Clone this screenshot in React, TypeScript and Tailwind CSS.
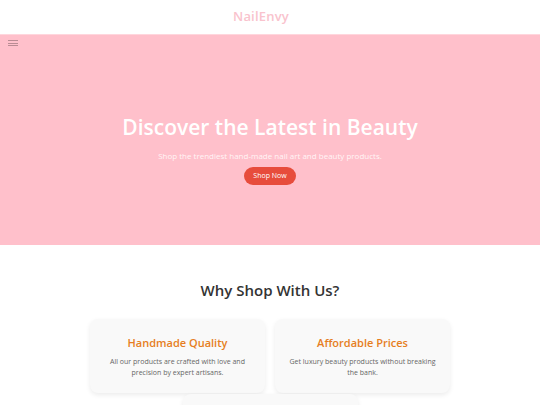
const FEATURES = [
  {
    title: 'Handmade Quality',
    text: 'All our products are crafted with love and precision by expert artisans.',
  },
  {
    title: 'Affordable Prices',
    text: 'Get luxury beauty products without breaking the bank.',
  },
  {
    title: 'Fast Shipping',
    text: 'Your order ships within 24 hours, right to your door.',
  },
];

export default function App() {
  return (
    <div className="min-h-screen bg-white font-['Open_Sans',sans-serif]">
      {/* Header */}
      <header className="h-[35px] flex items-center justify-center pr-[18px] border-b border-[#ffd6dd] bg-white">
        <h1 className="text-[13px] font-semibold text-[#f9c3cd] tracking-[0.2px]">NailEnvy</h1>
      </header>

      {/* Hero */}
      <section className="relative h-[210px] bg-[#ffc0cb] flex flex-col items-center pt-[82px]">
        <button className="absolute left-[8px] top-[5px] flex flex-col gap-[1.5px] p-0">
          <span className="block w-[10px] h-[1px] bg-[#b98b93]" />
          <span className="block w-[10px] h-[1px] bg-[#b98b93]" />
          <span className="block w-[10px] h-[1px] bg-[#b98b93]" />
        </button>
        <h2 className="text-[21px] font-semibold text-white leading-none">Discover the Latest in Beauty</h2>
        <p className="mt-[12px] text-[8px] leading-[11px] text-[#fff5f6]">
          Shop the trendiest hand-made nail art and beauty products.
        </p>
        <button className="mt-[6px] h-[18px] px-[9px] rounded-full bg-[#e74c3c] text-white text-[7px]">
          Shop Now
        </button>
      </section>

      {/* Features */}
      <section className="pt-[38px] flex flex-col items-center">
        <h3 className="text-[15px] font-semibold text-[#333] leading-none">Why Shop With Us?</h3>
        <div className="mt-[21px] w-[360px] flex flex-wrap justify-center gap-x-[10px] gap-y-[1px]">
          {FEATURES.map((f) => (
            <div
              key={f.title}
              className="w-[175px] h-[74px] rounded-[8px] bg-[#f9f9f9] shadow-[0_2px_5px_rgba(0,0,0,0.08)] flex flex-col items-center pt-[18px] px-[10px] text-center"
            >
              <h4 className="text-[11px] font-semibold text-[#e67e22] leading-none">{f.title}</h4>
              <p className="mt-[8px] text-[7px] leading-[11px] text-[#666]">{f.text}</p>
            </div>
          ))}
        </div>
      </section>
    </div>
  );
}
